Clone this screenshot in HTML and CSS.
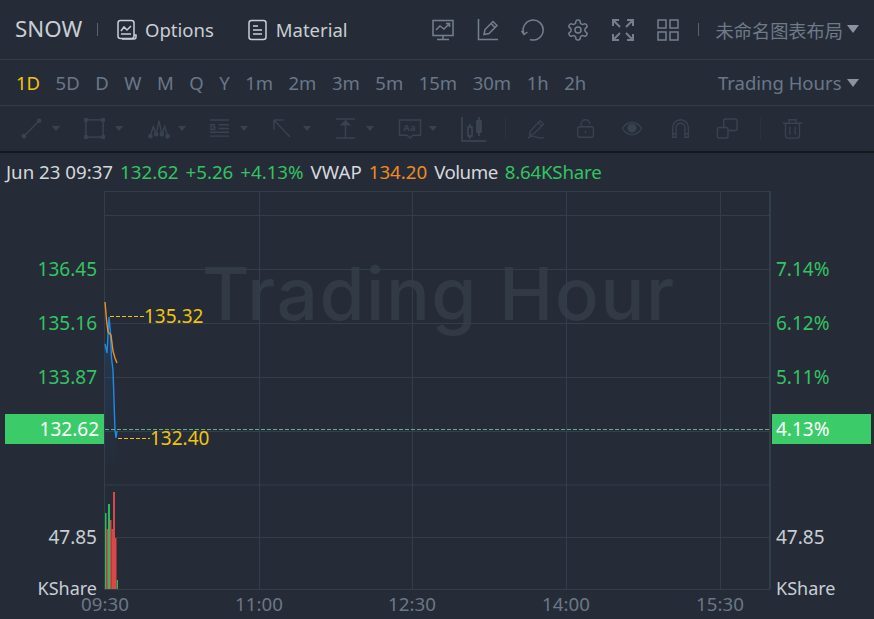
FILE: index.html
```html
<!DOCTYPE html>
<html lang="en">
<head>
  <meta charset="UTF-8">
  <meta name="viewport" content="width=device-width, initial-scale=1.0">
  <title>SNOW - Trading Hours</title>
  <link rel="stylesheet" href="styles.css">
</head>
<body>
  <div class="app">
    <header class="topbar">
      <span class="symbol">SNOW</span>
      <span class="sep"></span>
      <a class="link link-options">
        <svg class="ico" viewBox="0 0 22 22"><rect x="2" y="1.5" width="16" height="18" rx="2.5"/><path d="M5 12l3-4 3 3 4-4M5 15h10M18 16h2v2a2 2 0 0 1-2 2H6"/></svg>
        Options
      </a>
      <a class="link">
        <svg class="ico" viewBox="0 0 22 22"><rect x="2" y="1.5" width="17" height="19" rx="2.5"/><path d="M6 7h5M6 11h9M6 15h9"/></svg>
        Material
      </a>
      <div class="top-actions">
        <svg class="act" viewBox="0 0 24 24"><rect x="2" y="2.5" width="20" height="15"/><path d="M12 18v3M6 21.500h12M5 12l4-4 4 3 5-5M15 5.500h3.500V9"/></svg>
        <svg class="act" viewBox="0 0 24 24"><path d="M2.500 1v20.500H22M8 16.500l1-5 8-8 4 4-8 8zM15 5.500l4 4"/></svg>
        <svg class="act" viewBox="0 0 24 24"><path d="M3 16A10 10 0 1 1 9 21.500M0.500 13L3 16.500l3.500-2.500"/></svg>
        <svg class="act" viewBox="0 0 24 24"><path d="M12.220 2h-.44a2 2 0 0 0-2 2v.18a2 2 0 0 1-1 1.730l-.43.25a2 2 0 0 1-2 0l-.15-.08a2 2 0 0 0-2.730.73l-.22.38a2 2 0 0 0 .73 2.730l.15.1a2 2 0 0 1 1 1.720v.51a2 2 0 0 1-1 1.740l-.15.09a2 2 0 0 0-.73 2.730l.22.38a2 2 0 0 0 2.730.73l.15-.08a2 2 0 0 1 2 0l.43.25a2 2 0 0 1 1 1.730V20a2 2 0 0 0 2 2h.44a2 2 0 0 0 2-2v-.18a2 2 0 0 1 1-1.730l.43-.25a2 2 0 0 1 2 0l.15.08a2 2 0 0 0 2.730-.73l.22-.39a2 2 0 0 0-.73-2.730l-.15-.08a2 2 0 0 1-1-1.740v-.5a2 2 0 0 1 1-1.740l.15-.09a2 2 0 0 0 .73-2.730l-.22-.38a2 2 0 0 0-2.730-.73l-.15.08a2 2 0 0 1-2 0l-.43-.25a2 2 0 0 1-1-1.730V4a2 2 0 0 0-2-2z"/><circle cx="12" cy="12" r="3"/></svg>
        <svg class="act act-bold" viewBox="0 0 24 24"><path d="M2 8V2h6M3 3l6 6M16 2h6v6M21 3l-6 6M2 16v6h6M3 21l6-6M22 16v6h-6M21 21l-6-6"/></svg>
        <svg class="act" viewBox="0 0 24 24"><rect x="2" y="2" width="8" height="8"/><rect x="14" y="2" width="8" height="8"/><rect x="2" y="14" width="8" height="8"/><rect x="14" y="14" width="8" height="8"/></svg>
      </div>
      <span class="sep sep-right"></span>
      <span class="layout-name">未命名图表布局</span>
      <span class="caret"></span>
    </header>

    <nav class="periods">
      <span class="period active">1D</span>
      <span class="period">5D</span>
      <span class="period">D</span>
      <span class="period">W</span>
      <span class="period">M</span>
      <span class="period">Q</span>
      <span class="period">Y</span>
      <span class="period">1m</span>
      <span class="period">2m</span>
      <span class="period">3m</span>
      <span class="period">5m</span>
      <span class="period">15m</span>
      <span class="period">30m</span>
      <span class="period">1h</span>
      <span class="period">2h</span>
      <span class="session">Trading Hours</span>
      <span class="caret"></span>
    </nav>

    <div class="tools">
      <div class="tool">
        <svg class="tico" viewBox="0 0 22 22"><path d="M3 19L19 3"/><circle cx="3" cy="19" r="1.700" class="dot"/><circle cx="19" cy="3" r="1.700" class="dot"/></svg>
        <span class="mini-caret"></span>
      </div>
      <div class="tool">
        <svg class="tico" viewBox="0 0 22 22"><rect x="2" y="2" width="18" height="18"/><circle cx="2" cy="2" r="1.700" class="dot"/><circle cx="20" cy="2" r="1.700" class="dot"/><circle cx="2" cy="20" r="1.700" class="dot"/><circle cx="20" cy="20" r="1.700" class="dot"/></svg>
        <span class="mini-caret"></span>
      </div>
      <div class="tool">
        <svg class="tico tico-wide" viewBox="0 0 22 22"><path d="M2 19L5 9l3 8 3-14 3 14 3-8 3 10"/><circle cx="2" cy="19" r="1.700" class="dot"/><circle cx="8" cy="17" r="1.700" class="dot"/><circle cx="14" cy="17" r="1.700" class="dot"/><circle cx="20" cy="19" r="1.700" class="dot"/></svg>
        <span class="mini-caret mini-caret-near"></span>
      </div>
      <div class="tool">
        <svg class="tico" viewBox="0 0 22 22"><path d="M1 2h20M10 7h11M10 11h11M1 15h20M1 19h20"/><path d="M6.500 7H2v5h4V9.500H4"/></svg>
        <span class="mini-caret"></span>
      </div>
      <div class="tool">
        <svg class="tico" viewBox="0 0 22 22"><path d="M2 2l17 18M2 2v10M2 2h10"/></svg>
        <span class="mini-caret"></span>
      </div>
      <div class="tool">
        <svg class="tico" viewBox="0 0 22 22"><path d="M1 1h20M1 21h20M11 6v15"/><path d="M7 7l4-4 4 4z" class="dot"/></svg>
        <span class="mini-caret"></span>
      </div>
      <div class="tool">
        <svg class="tico tico-wide" viewBox="0 0 24 22"><path d="M1 2h22v16h-8l-3 3-3-3H1z"/><text x="5" y="14" class="aa">Aa</text></svg>
        <span class="mini-caret mini-caret-near"></span>
      </div>
      <svg class="tico tico-candle" viewBox="0 0 26 26"><path d="M1 1v24h24"/><rect x="7" y="11" width="4" height="9"/><path d="M9 8v3M9 20v3"/><rect x="16" y="5" width="4" height="11" class="dot"/><path d="M18 1v4M18 16v4"/></svg>
      <span class="tool-sep tool-sep-a"></span>
      <svg class="tico tico-pen" viewBox="0 0 24 24"><path d="M5 15L16 3l4 4L9 18l-5 2zM14 5l4 4M2 23c4-3 6-3 9-1.500s6 1.500 10 1"/></svg>
      <svg class="tico tico-lock" viewBox="0 0 24 24"><rect x="3" y="10" width="18" height="12" rx="2.500"/><path d="M7 10V7a5 5 0 0 1 10 0M12 14.500v3"/></svg>
      <svg class="tico tico-eye" viewBox="0 0 24 24"><path d="M1 12c3-5 7-7 11-7s8 2 11 7c-3 5-7 7-11 7S4 17 1 12z"/><circle cx="12" cy="11.500" r="4.500" class="dot"/></svg>
      <svg class="tico tico-magnet" viewBox="0 0 24 24"><path d="M3 22V11a9 9 0 0 1 18 0v11h-4V11a5 5 0 0 0-10 0v11zM3 18h4M17 18h4"/></svg>
      <svg class="tico tico-copy" viewBox="0 0 24 24"><rect x="1.500" y="11" width="11" height="11" rx="2"/><path d="M8 11V4a2 2 0 0 1 2-2h10a2 2 0 0 1 2 2v8a2 2 0 0 1-2 2h-7"/></svg>
      <span class="tool-sep tool-sep-b"></span>
      <svg class="tico tico-trash" viewBox="0 0 24 24"><path d="M1 6h22M8 6V2h8v4M4 6v14a3 3 0 0 0 3 3h10a3 3 0 0 0 3-3V6M9 10v9M15 10v9"/></svg>
    </div>

    <div class="quote">
      <span>Jun 23 09:37</span>
      <span class="up">132.62</span>
      <span class="up">+5.26</span>
      <span class="up">+4.13%</span>
      <span>VWAP</span>
      <span class="avg">134.20</span>
      <span class="tight">Volume</span>
      <span class="up tight-last">8.64KShare</span>
    </div>

    <svg class="chart" viewBox="0 191 874 428" width="874" height="428">
      <defs>
        <linearGradient id="area" x1="0" y1="0" x2="0" y2="1">
          <stop offset="0" stop-color="#1f8ae8" stop-opacity="0.16"/>
          <stop offset="0.55" stop-color="#1f8ae8" stop-opacity="0"/>
        </linearGradient>
      </defs>

      <text class="watermark" x="202" y="320">Trading Hour</text>

      <g class="grid">
        <path d="M104 191.500H771M104 215.500H770M104 269.500H770M104 323.500H770M104 377.500H770M104 431.500H770M104 485H770M104 537.500H770M104 589.500H770"/>
        <path d="M104.500 191V589M259.500 191V589M412.500 191V589M566.500 191V589M720.500 191V589"/>
        <path class="grid-edge" d="M770 191V589"/>
      </g>

      <!-- price -->
      <path d="M105 344L107 353L109 317L110.500 333L111.500 358L113 370L115 430L116 438L117 431V589H105Z" fill="url(#area)"/>
      <path class="price-line" d="M105 344L107 353L109 317L110.500 333L111.500 358L113 370L115 430L116 438L117 431"/>
      <path class="avg-line" d="M105 302L106.500 320L108 332L111 335L113 351L115 358L117 363"/>

      <path class="last-line" d="M105 429.500H770"/>
      <path class="hilo-line" d="M110 316.500H144M118 438.500H150"/>
      <text class="hilo" x="144" y="323">135.32</text>
      <text class="hilo" x="150" y="445">132.40</text>

      <!-- volume -->
      <g class="vol-up">
        <rect x="105" y="513" width="1.500" height="76"/>
        <rect x="108" y="504" width="2" height="85"/>
        <rect x="116.500" y="580" width="1.500" height="9"/>
      </g>
      <g class="vol-down">
        <rect x="106.500" y="529" width="1.500" height="60"/>
        <rect x="110" y="520" width="1.500" height="69"/>
        <rect x="111.500" y="529" width="2" height="60"/>
        <rect x="113" y="492" width="2" height="97"/>
        <rect x="115" y="538" width="1.500" height="51"/>
      </g>

      <!-- left axis -->
      <text class="axis up-fill end" x="97" y="276">136.45</text>
      <text class="axis up-fill end" x="97" y="330">135.16</text>
      <text class="axis up-fill end" x="97" y="384">133.87</text>
      <text class="axis plain end" x="97" y="544">47.85</text>
      <text class="unit plain end" x="97" y="595">KShare</text>

      <!-- right axis -->
      <text class="axis up-fill" x="776" y="276">7.14%</text>
      <text class="axis up-fill" x="776" y="330">6.12%</text>
      <text class="axis up-fill" x="776" y="384">5.11%</text>
      <text class="axis plain" x="776" y="544">47.85</text>
      <text class="unit plain" x="776" y="595">KShare</text>

      <rect class="tag" x="5" y="414" width="99" height="30"/>
      <text class="axis tag-text end" x="99" y="436">132.62</text>
      <rect class="tag" x="772" y="414" width="99" height="30"/>
      <text class="axis tag-text" x="776" y="436">4.13%</text>

      <!-- time axis -->
      <text class="time mid" x="105" y="611">09:30</text>
      <text class="time mid" x="259" y="611">11:00</text>
      <text class="time mid" x="412" y="611">12:30</text>
      <text class="time mid" x="566" y="611">14:00</text>
      <text class="time mid" x="720" y="611">15:30</text>
    </svg>
  </div>
</body>
</html>
```

FILE: styles.css
```css
* {
  box-sizing: border-box;
}
html, body {
  margin: 0;
  height: 100%;
  background-color: #252c38;
}
body {
  font-family: "Noto Sans", "Noto Sans CJK SC", sans-serif;
  color: #d5d8dc;
  overflow: hidden;
}
.app {
  width: 874px;
  height: 619px;
  display: flex;
  flex-direction: column;
}

/* top bar */
.topbar {
  height: 60px;
  display: flex;
  align-items: center;
  padding-left: 15px;
  border-bottom: 1px solid #333d49;
  font-size: 18.500px;
  color: #c9ced4;
}
.symbol {
  font-size: 22.300px;
  width: 67px;
  margin-top: -2px;
  white-space: nowrap;
}
.sep {
  width: 1px;
  height: 13px;
  background-color: #59636f;
  margin-left: 15px;
}
.sep-right {
  margin-left: 18px;
}
.link {
  display: flex;
  align-items: center;
  gap: 7px;
  margin-left: 33px;
}
.link-options {
  margin-left: 18px;
}
.ico {
  width: 22px;
  height: 22px;
  fill: none;
  stroke: #c9ced4;
  stroke-width: 1.500;
}
.top-actions {
  display: flex;
  gap: 21px;
  margin-left: 83px;
}
.act {
  width: 24px;
  height: 24px;
  fill: none;
  stroke: #747f8d;
  stroke-width: 1.500;
}
.act-bold {
  stroke-width: 2;
}
.layout-name {
  color: #6f7a88;
  font-size: 18.200px;
  margin-left: 17px;
  width: 127px;
  white-space: nowrap;
}
.caret {
  width: 0;
  height: 0;
  border-left: 6px solid transparent;
  border-right: 6px solid transparent;
  border-top: 8px solid #8a939f;
  margin-left: 4px;
  margin-top: -2px;
}

/* period row */
.periods {
  height: 46px;
  display: flex;
  align-items: center;
  gap: 15.500px;
  padding-left: 16px;
  border-bottom: 1px solid #333d49;
  font-size: 18.500px;
  color: #6a7789;
}
.period.active {
  color: #f1c40f;
}
.session {
  margin-left: auto;
  margin-right: -10px;
}
.periods .caret {
  margin-left: 0;
  margin-top: 0;
  margin-right: 15px;
}

/* drawing tools */
.tools {
  height: 47px;
  display: flex;
  align-items: center;
  padding-left: 21px;
  border-bottom: 2px solid #15191f;
}
.tool {
  width: 62.800px;
  display: flex;
  align-items: center;
  flex: none;
}
.tico {
  width: 21px;
  height: 21px;
  flex: none;
  fill: none;
  stroke: #39434f;
  stroke-width: 1.500;
}
.tico-wide {
  width: 24px;
}
.tico-candle {
  width: 26px;
  height: 26px;
  stroke: #3d4854;
}
.tico .dot {
  fill: #39434f;
}
.tico .aa {
  font-size: 10px;
  font-weight: 700;
  fill: #39434f;
  stroke: none;
}
.mini-caret {
  width: 0;
  height: 0;
  margin-left: 10px;
  border-left: 4px solid transparent;
  border-right: 4px solid transparent;
  border-top: 5px solid #39434f;
}
.mini-caret-near {
  margin-left: 7px;
}
.tool-sep {
  width: 1px;
  height: 22px;
  background-color: #2b333e;
  flex: none;
}
.tool-sep-a {
  margin-left: 18px;
}
.tico-pen {
  margin-left: 20px;
}
.tico-lock {
  margin-left: 28px;
}
.tico-eye {
  margin-left: 24px;
  width: 24px;
}
.tico-magnet {
  margin-left: 26px;
}
.tico-copy {
  margin-left: 25px;
  width: 23px;
  height: 23px;
}
.tool-sep-b {
  margin-left: 21px;
}
.tico-trash {
  margin-left: 21px;
}

/* quote line */
.quote {
  height: 38px;
  display: flex;
  align-items: center;
  gap: 7px;
  padding-left: 6px;
  padding-bottom: 2px;
  font-size: 18.700px;
  color: #d5d8dc;
  white-space: nowrap;
}
.tight {
  letter-spacing: -0.500px;
}
.tight-last {
  letter-spacing: -0.200px;
}
.up {
  color: #34c262;
}
.avg {
  color: #f08a24;
}

/* chart */
.chart {
  display: block;
  flex: none;
}
.watermark {
  font-family: Inter, sans-serif;
  font-size: 73px;
  font-weight: 500;
  letter-spacing: 1.500px;
  fill: #323a46;
}
.grid path {
  fill: none;
  stroke: #323e4a;
  stroke-width: 1;
}
.grid .grid-edge {
  stroke-width: 2;
}
.price-line,
.avg-line {
  fill: none;
  stroke-width: 1.400;
}
.price-line {
  stroke: #1f8ae8;
}
.avg-line {
  stroke: #e8912c;
}
.last-line {
  fill: none;
  stroke: #62b184;
  stroke-width: 1;
  stroke-dasharray: 4 2;
}
.hilo-line {
  fill: none;
  stroke: #f1c40f;
  stroke-width: 1;
  stroke-dasharray: 4 2;
}
.hilo {
  font-size: 19px;
  fill: #f1c40f;
}
.vol-up {
  fill: #2cba5a;
}
.vol-down {
  fill: #d84848;
}
.axis {
  font-size: 19px;
}
.unit {
  font-size: 18px;
}
.end {
  text-anchor: end;
}
.mid {
  text-anchor: middle;
}
.up-fill {
  fill: #34c262;
}
.plain {
  fill: #c9ced4;
}
.time {
  font-size: 18.700px;
  fill: #6c7786;
}
.tag {
  fill: #3ccb69;
}
.tag-text {
  fill: #fff;
}
```
